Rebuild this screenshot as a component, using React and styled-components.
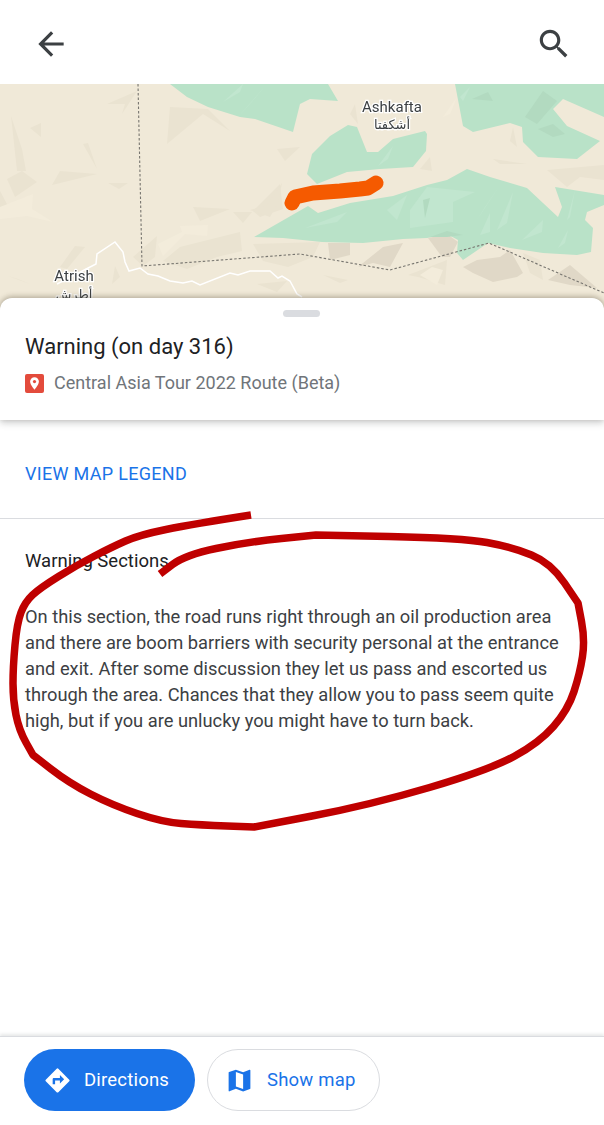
import React from 'react';
import styled, { createGlobalStyle } from 'styled-components';

const GlobalStyle = createGlobalStyle`
  html, body {
    margin: 0;
    padding: 0;
    background: #fff;
    font-family: Roboto, "Noto Sans", sans-serif;
  }
  * { box-sizing: border-box; }
`;

const Page = styled.div`
  position: relative;
  width: 604px;
  height: 1125px;
  overflow: hidden;
  display: flex;
  flex-direction: column;
  background: #fff;
`;

const TopBar = styled.header`
  height: 84px;
  flex: none;
  display: flex;
  align-items: center;
  justify-content: space-between;
  padding: 4px 31px 0 32px;
`;

const BarIcon = styled.svg`
  width: 38px;
  height: 38px;
  fill: #3c4043;
  display: block;
`;

const MapBox = styled.div`
  height: 226px;
  flex: none;
  overflow: hidden;
  background: #f0e9d8;
`;

const MapSvg = styled.svg`
  display: block;
  width: 604px;
  height: 226px;
  filter: blur(0.4px);
`;

const PlaceLabel = styled.text`
  font-family: ${p => (p.$arabic ? '"DejaVu Sans", sans-serif' : 'Roboto, sans-serif')};
  font-size: ${p => (p.$arabic ? '13px' : '15px')};
  fill: #3c4043;
  stroke: #fff;
  stroke-width: 2.5px;
  paint-order: stroke;
  text-anchor: middle;
`;

const InfoCard = styled.section`
  position: relative;
  z-index: 1;
  flex: none;
  height: 122px;
  margin-top: -12px;
  padding: 34px 25px 0;
  background: #fff;
  border-radius: 12px 12px 0 0;
  box-shadow: 0 -2px 5px rgba(90, 80, 55, 0.3), 0 3px 7px rgba(60, 64, 67, 0.26);
`;

const Handle = styled.div`
  position: absolute;
  top: 12px;
  left: 283px;
  width: 37px;
  height: 7px;
  border-radius: 4px;
  background: #dadce0;
`;

const Title = styled.h1`
  margin: 0;
  font-size: 22px;
  line-height: 30px;
  font-weight: 400;
  color: #202124;
`;

const Subtitle = styled.div`
  display: flex;
  align-items: center;
  gap: 10px;
  margin-top: 9px;
  font-size: 18px;
  line-height: 24px;
  color: #70757a;
`;

const PinBadge = styled.svg`
  width: 19px;
  height: 19px;
  flex: none;
  display: block;
`;

const LegendRow = styled.div`
  flex: none;
  height: 99px;
  padding-top: 42px;
  border-bottom: 1.5px solid #dadce0;
  padding-left: 25px;
`;

const LegendLink = styled.a`
  font-size: 18px;
  line-height: 24px;
  font-weight: 400;
  letter-spacing: 0.3px;
  color: #1a73e8;
`;

const Details = styled.div`
  flex: 1;
  padding: 30px 25px 0;
`;

const SectionName = styled.h2`
  margin: 0 0 31px;
  font-size: 18.5px;
  line-height: 24px;
  font-weight: 400;
  color: #202124;
`;

const BodyText = styled.p`
  margin: 0;
  width: 545px;
  font-size: 18.3px;
  line-height: 25.9px;
  color: #3c4043;
`;

const Footer = styled.footer`
  flex: none;
  height: 89px;
  display: flex;
  align-items: flex-start;
  gap: 12px;
  padding: 12px 24px 0;
  border-top: 1.5px solid #dadce0;
  box-shadow: 0 -2px 3px rgba(60, 64, 67, 0.12);
`;

const PillButton = styled.button`
  display: flex;
  align-items: center;
  height: 62px;
  width: ${p => p.$width}px;
  padding: 0 0 0 ${p => p.$inset}px;
  gap: ${p => p.$gap}px;
  border-radius: 31px;
  border: ${p => (p.$primary ? 'none' : '1.5px solid #dadce0')};
  background: ${p => (p.$primary ? '#1a73e8' : '#fff')};
  color: ${p => (p.$primary ? '#fff' : '#1a73e8')};
  font-family: Roboto, sans-serif;
  font-size: 18.5px;
  font-weight: 400;
  letter-spacing: 0.2px;
`;

const PillIcon = styled.svg`
  width: 29px;
  height: 29px;
  fill: currentColor;
  flex: none;
  display: block;
`;

const Scribble = styled.svg`
  position: absolute;
  top: 0;
  left: 0;
  z-index: 5;
  pointer-events: none;
`;

const greens = [
  '170,84 187,97 208,107 240,117 255,119 293,132 300,104 310,99 338,101 328,84',
  '348,125 330,136 312,154 307,174 317,184 347,172 380,169 413,167 426,151 427,134 425,131 393,139 378,152 367,152 357,127',
  '254,237 308,206 318,213 350,203 393,196 427,185 447,180 467,169 490,177 527,188 543,203 558,217 562,207 555,187 604,195 604,205 587,212 585,220 593,228 591,252 577,255 543,253 510,248 488,243 463,260 457,253 458,240 447,234 427,238 403,239 363,243 322,242 283,238',
  '455,84 463,126 473,132 510,123 522,127 523,142 538,157 577,159 600,141 567,126 553,109 563,99 604,117 604,84',
];

const lightGreens = [
  '305,228 347,212 337,222',
  '387,210 407,195 397,220',
  '410,210 427,187 475,192 453,202 453,222 410,228',
  '477,220 500,185 485,207',
  '480,235 490,213 490,232',
  '497,230 513,192 507,223',
  '522,240 543,220 542,232',
  '558,248 568,230 565,243',
  '567,220 575,190 570,217',
  '378,166 393,146 388,159',
  '223,102 243,84 240,92',
  '238,117 267,84 250,104',
  '460,97 470,87 463,101',
];

const darkGreens = [
  '430,237 447,231 463,235 447,237',
  '423,200 430,198 425,218',
  '525,117 543,91 557,101 537,124',
  '538,129 553,124 565,134 553,137',
  '472,99 488,92 493,101',
];

// faint terrain facets over the whole map
const faintShades = [
  '11,116 17,171 26,171 22,149',
  '30,128 41,123 41,137',
  '83,144 88,143 97,169',
  '52,185 60,171 97,174',
  '7,179 22,171 37,182 15,197',
  '108,183 128,183 119,189',
  '107,104 137,91 122,114 125,104',
  '170,107 208,109 230,131 203,114 167,144',
  '0,191 8,206 0,211',
  '193,207 230,209 200,221',
  '233,212 252,212 243,223',
  '253,211 280,184 283,209 260,217',
  '277,149 300,147 285,161',
  '133,257 157,236 155,257 143,266',
  '163,261 180,247 240,232 242,251 217,257 187,269',
  '253,244 320,242 313,257 288,267 263,261',
  '257,284 287,281 277,292',
  '60,267 75,246 85,247 67,269',
  '8,276 30,284 18,279',
  '112,284 115,266 120,277',
  '250,210 267,205 282,183 278,203 270,217',
  '323,275 348,280 340,283',
  '408,275 447,260 445,285 418,277',
  '523,253 540,260 543,280 530,273',
  '547,170 604,165 604,180 580,177 567,187',
  '510,141 513,127 517,147',
  '493,159 527,164 500,164',
  '350,114 355,104 358,124',
  '420,169 430,157 432,171',
];

// darker facets in the hills along the bottom
const hillShades = [
  '328,243 350,243 350,255 330,260',
  '358,267 383,247 403,243 390,267 373,263',
  '428,238 447,234 458,242 450,257 442,257',
  '463,267 477,260 500,257 510,250 523,273 517,277 493,282 473,273',
  '548,280 570,265 597,288 570,285',
];

const lightShades = [
  '0,207 33,194 32,209 53,222 27,216 0,219',
  '158,244 182,232 180,226 208,225 207,236 185,234 163,256',
  '420,275 432,267 443,270 437,285',
  '443,117 457,97 450,114',
];

const route = 'M292 203 L295 197 L313 193 L340 191 L360 189 L368 188 L376 183';
const borderPath = 'M138 84 L142 266 L300 254 L390 270 L489 243 L604 293';
const road = 'M57 284 L96 264 L97 254 L115 242 L123 252 L125 262 L129 271 L140 268 L148 274 L158 276 L170 281 L183 283 L192 281 L200 285 L230 273 L238 275 L250 271 L270 271 L278 278 L282 276 L290 281 L297 294 L302 297';

// repeated points keep the sharp corners of the hand-drawn line
const scribblePoints = [
  [251, 515], [193, 524], [139, 535], [112, 547], [77, 565], [40, 588], [25, 602], [17, 623], [13, 667], [13, 700],
  [19, 730], [33, 755], [33, 755], [69, 783], [112, 805], [162, 822], [200, 825], [254, 827], [254, 827], [370, 805],
  [489, 770], [539, 743], [568, 710], [580, 673], [585, 640], [578, 603], [578, 603], [551, 563], [512, 547], [462, 538],
  [316, 535], [316, 535], [247, 542], [185, 555], [160, 574],
];

// round the hand-drawn line by curving through the midpoints
const smoothPath = pts => {
  let d = `M${pts[0][0]} ${pts[0][1]}`;
  for (let i = 1; i < pts.length - 1; i++) {
    const mx = (pts[i][0] + pts[i + 1][0]) / 2;
    const my = (pts[i][1] + pts[i + 1][1]) / 2;
    d += ` Q${pts[i][0]} ${pts[i][1]} ${mx} ${my}`;
  }
  const last = pts[pts.length - 1];
  return `${d} L${last[0]} ${last[1]}`;
};

const App = () => (
  <Page>
    <GlobalStyle />
    <TopBar>
      <BarIcon viewBox="0 0 24 24">
        <path d="M20 11H7.83l5.59-5.59L12 4l-8 8 8 8 1.41-1.41L7.83 13H20v-2z" />
      </BarIcon>
      <BarIcon viewBox="0 0 24 24">
        <path d="M15.5 14h-.79l-.28-.27C15.41 12.59 16 11.11 16 9.5 16 5.91 13.09 3 9.5 3S3 5.91 3 9.5 5.91 16 9.5 16c1.61 0 3.09-.59 4.23-1.57l.27.28v.79l5 4.99L20.49 19l-4.99-5zm-6 0C7.01 14 5 11.99 5 9.5S7.01 5 9.5 5 14 7.01 14 9.5 11.99 14 9.5 14z" />
      </BarIcon>
    </TopBar>

    <MapBox>
      <MapSvg viewBox="0 84 604 226">
        {faintShades.map((s, i) => <polygon key={i} points={s} fill="#eae3d1" />)}
        {hillShades.map((s, i) => <polygon key={i} points={s} fill="#e0d8c7" />)}
        {lightShades.map((s, i) => <polygon key={i} points={s} fill="#f3ecdb" />)}
        {greens.map((s, i) => <polygon key={i} points={s} fill="#b9e2c8" />)}
        {lightGreens.map((s, i) => <polygon key={i} points={s} fill="#c1e6cf" />)}
        {darkGreens.map((s, i) => <polygon key={i} points={s} fill="#b2dac0" />)}
        <path d={borderPath} fill="none" stroke="#77756f" strokeWidth="1.1" strokeDasharray="2.5 2" />
        <path d={road} fill="none" stroke="#fff" strokeWidth="1.5" />
        <path d={route} fill="none" stroke="#f55a00" strokeWidth="15" strokeLinecap="round" strokeLinejoin="round" />
        <PlaceLabel x="392" y="112">Ashkafta</PlaceLabel>
        <PlaceLabel $arabic x="392" y="129">أشكفتا</PlaceLabel>
        <PlaceLabel x="74" y="281">Atrish</PlaceLabel>
        <PlaceLabel $arabic x="74" y="299">أطرش</PlaceLabel>
      </MapSvg>
    </MapBox>

    <InfoCard>
      <Handle />
      <Title>Warning (on day 316)</Title>
      <Subtitle>
        <PinBadge viewBox="0 0 19 19">
          <rect width="19" height="19" rx="2" fill="#e34b3c" />
          <path d="M9.5 3.2a4.4 4.4 0 0 0-4.4 4.4c0 3.2 4.4 8.2 4.4 8.2s4.4-5 4.4-8.2a4.4 4.4 0 0 0-4.4-4.4z" fill="#fff" />
          <circle cx="9.5" cy="7.6" r="1.6" fill="#e34b3c" />
        </PinBadge>
        Central Asia Tour 2022 Route (Beta)
      </Subtitle>
    </InfoCard>

    <LegendRow>
      <LegendLink>VIEW MAP LEGEND</LegendLink>
    </LegendRow>

    <Details>
      <SectionName>Warning Sections</SectionName>
      <BodyText>
        On this section, the road runs right through an oil production area and there are boom barriers with security personal at the entrance and exit. After some discussion they let us pass and escorted us through the area. Chances that they allow you to pass seem quite high, but if you are unlucky you might have to turn back.
      </BodyText>
    </Details>

    <Footer>
      <PillButton $primary $width={171} $inset={19} $gap={12}>
        <PillIcon viewBox="0 0 24 24">
          <path d="M21.71 11.29l-9-9a.996.996 0 00-1.41 0l-9 9a.996.996 0 000 1.41l9 9c.39.39 1.02.39 1.41 0l9-9a.996.996 0 000-1.41zM14 14.5V12h-4v3H8v-4c0-.55.45-1 1-1h5V7.5l3.5 3.5-3.5 3.5z" />
        </PillIcon>
        Directions
      </PillButton>
      <PillButton $width={173} $inset={17} $gap={13}>
        <PillIcon viewBox="0 0 24 24">
          <path d="M20.5 3l-.16.03L15 5.1 9 3 3.36 4.9c-.21.07-.36.25-.36.48V20.5c0 .28.22.5.5.5l.16-.03L9 18.9l6 2.1 5.64-1.9c.21-.07.36-.25.36-.48V3.5c0-.28-.22-.5-.5-.5zM15 19l-6-2.11V5l6 2.11V19z" />
        </PillIcon>
        Show map
      </PillButton>
    </Footer>

    <Scribble width="604" height="1125" viewBox="0 0 604 1125">
      <path d={smoothPath(scribblePoints)} fill="none" stroke="#bf0000" strokeWidth="7.5" strokeLinejoin="round" />
    </Scribble>
  </Page>
);

export default App;
